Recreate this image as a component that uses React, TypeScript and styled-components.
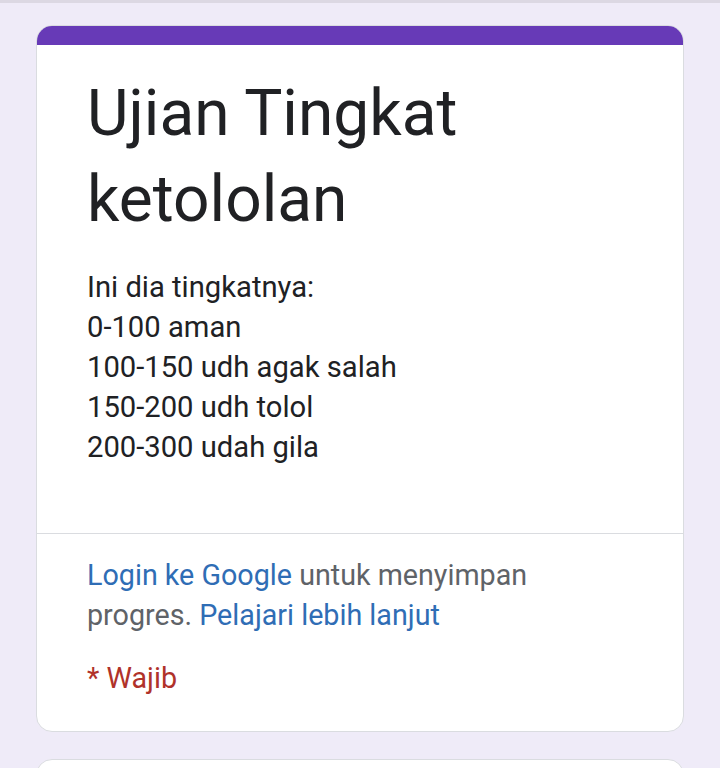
import styled, { createGlobalStyle } from "styled-components";

const GlobalStyle = createGlobalStyle`
  html, body {
    margin: 0;
    padding: 0;
    background: #efebf8;
  }
  body {
    font-family: Roboto, "Noto Sans", Arial, sans-serif;
    color: #202124;
  }
`;

const Page = styled.div`
  height: 768px;
  border-top: 3px solid #dcd8e3;
  padding: 22px 36px 0;
  display: flex;
  flex-direction: column;
  gap: 27px;
  box-sizing: border-box;
  overflow: hidden;
`;

const Card = styled.div`
  background: #fff;
  border: 1px solid #dadce0;
  border-radius: 16px;
  overflow: hidden;
  flex-shrink: 0;
`;

const AccentBar = styled.div`
  height: 20px;
  background: #673ab7;
  margin: -1px -1px 0;
`;

const Header = styled.div`
  padding: 26px 50px 66px;
  border-bottom: 1px solid #dadce0;
`;

const Title = styled.h1`
  margin: 0;
  font-size: 64px;
  line-height: 86px;
  font-weight: 400;
  color: #202124;
`;

const Description = styled.div`
  margin-top: 24px;
  font-size: 29.2px;
  line-height: 40px;
  color: #202124;
`;

const Footer = styled.div`
  padding: 21px 50px 33px;
`;

const Notice = styled.p`
  margin: 0;
  font-size: 28.7px;
  line-height: 40px;
  color: #5f6368;
`;

const TextLink = styled.a`
  color: #2f6db5;
  text-decoration: none;
`;

const Required = styled.div`
  margin-top: 23px;
  font-size: 28.7px;
  line-height: 40px;
  color: #b0322a;
`;

const NextCard = styled(Card)`
  height: 120px;
`;

const levels = [
  "Ini dia tingkatnya:",
  "0-100 aman",
  "100-150 udh agak salah",
  "150-200 udh tolol",
  "200-300 udah gila",
];

export default function App() {
  return (
    <>
      <GlobalStyle />
      <Page>
        <Card>
          <AccentBar />
          <Header>
            <Title>
              Ujian Tingkat
              <br />
              ketololan
            </Title>
            <Description>
              {levels.map((line) => (
                <div key={line}>{line}</div>
              ))}
            </Description>
          </Header>
          <Footer>
            <Notice>
              <TextLink href="#">Login ke Google</TextLink> untuk menyimpan
              <br />
              progres. <TextLink href="#">Pelajari lebih lanjut</TextLink>
            </Notice>
            <Required>* Wajib</Required>
          </Footer>
        </Card>
        <NextCard />
      </Page>
    </>
  );
}
